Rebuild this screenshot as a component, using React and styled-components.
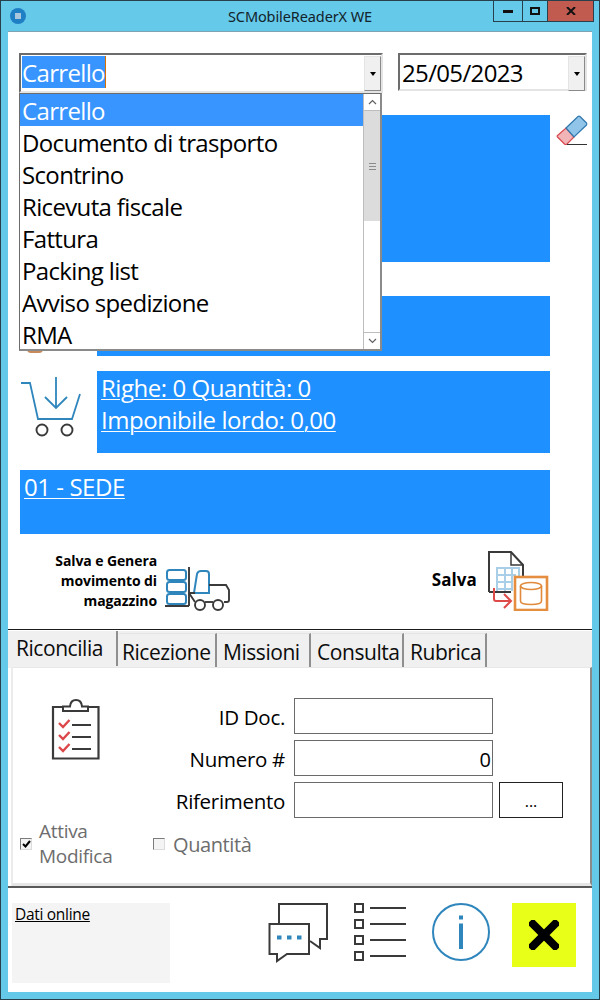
import React from "react";
import styled, { createGlobalStyle } from "styled-components";

const Global = createGlobalStyle`
  html, body { margin: 0; padding: 0; background: #fff; }
  body { font-family: "Open Sans", "Noto Sans", "Liberation Sans", sans-serif; }
  * { box-sizing: border-box; }
`;

const Win = styled.div`
  width: 600px; height: 1000px; background: #65c9ea; border: 1px solid #27404c;
  display: flex; flex-direction: column; overflow: hidden; color: #000;
`;
const TitleBar = styled.div`
  height: 30px; flex: none; display: grid; grid-template-columns: 1fr auto 1fr; align-items: start;
`;
const AppIcon = styled.div`
  width: 16px; height: 16px; margin: 7px 0 0 9px; border-radius: 50%; background: #1f7fc4;
  display: flex; align-items: center; justify-content: center;
  &::after { content: ""; width: 6px; height: 6px; background: #a9c6dc; }
`;
const Title = styled.div`
  font-size: 14.5px; line-height: 16px; padding-top: 7px; color: #12232b;
  font-family: "Noto Sans", sans-serif; letter-spacing: -.1px; white-space: nowrap;
`;
const WinBtns = styled.div`
  justify-self: end; display: flex; height: 21px; margin-right: 5px; border: 1px solid #27404c; border-top: 0;
`;
const WinBtn = styled.div`
  width: ${p => p.$w}px; display: flex; align-items: center; justify-content: center;
  background: ${p => p.$bg || "transparent"}; border-left: ${p => p.$first ? "0" : "1px solid #27404c"};
`;
const Body = styled.div`
  position: relative; flex: 1; margin: 0 7px 7px 7px; background: #fff; border-top: 1px solid #7fa3b2;
  display: flex; flex-direction: column;
`;
const Upper = styled.div`
  padding: 21px 0 0 12px; display: flex; flex-direction: column; height: 597px; flex: none;
`;
const TopRow = styled.div`
  display: flex; align-items: flex-start; height: 62px; margin-left: -1px;
`;
const ComboBox = styled.div`
  display: flex; height: ${p => p.$h}px; width: ${p => p.$w}px; margin-left: ${p => p.$ml || 0}px;
  border: 2px solid #6c6c6c; border-right-color: #e4e4e4; border-bottom-color: #e4e4e4; background: #fff;
  font-size: 24px; line-height: 32px; padding: 1px 0 0 1px; letter-spacing: -.65px;
`;
const Selected = styled.span`
  display: inline-block; height: 32px; line-height: 34px; background: #3895ff; color: #fff; border-right: 1px solid #d96f00;
`;
const ComboText = styled.span`
  flex: 1; padding-left: ${p => p.$pl || 0}px; line-height: ${p => p.$lh || 32}px;
`;
const DropBtn = styled.div`
  width: 17px; height: 35px; background: #f0f0f0; border: 1px solid #e4e4e4;
  border-right-color: #8a8a8a; border-bottom-color: #8a8a8a; display: flex; align-items: center; justify-content: center;
  &::after { content: ""; border: 3.5px solid transparent; border-top: 4px solid #000; border-bottom: 0; }
`;
const Row = styled.div`
  display: flex; align-items: flex-start; height: ${p => p.$h}px; margin-top: ${p => p.$mt || 0}px;
`;
const IconSlot = styled.div`
  width: 77px; flex: none; padding-top: ${p => p.$pt || 0}px;
`;
const Panel = styled.div`
  background: #1e90ff; color: #fff; width: ${p => p.$w}px; height: ${p => p.$h}px; font-size: 24px; line-height: 32px;
  padding: 1px 4px; letter-spacing: -.45px;
`;
const PanelLine = styled.div`
  text-decoration: underline; text-underline-offset: 2px; text-decoration-thickness: 1px; white-space: nowrap;
`;
const Eraser = styled.div`margin: 0 0 0 6px;`;
const Actions = styled.div`
  display: flex; justify-content: space-between; height: 70px; margin-top: 11px; padding-right: 43px;
`;
const Action = styled.div`
  display: flex; align-items: center; gap: ${p => p.$gap}px; margin-left: ${p => p.$ml || 0}px;
`;
const ActionLabel = styled.div`
  font-size: 14px; font-weight: 700; line-height: 20px; text-align: right; width: ${p => p.$w}px; letter-spacing: -.1px; padding-top: 2px;
`;
const SaveLabel = styled(ActionLabel)`font-size: 17px; letter-spacing: .1px; padding-top: 0; white-space: nowrap;`;
const TruckSlot = styled.div`margin-top: 20px;`;
const Rule = styled.div`
  height: 1px; flex: none; background: #1b1b1b;
`;
const TabBar = styled.div`
  margin-top: 1px; height: 37px; flex: none; background: #f0f0f0; display: flex; padding-left: 1px; align-items: flex-start;
`;
const Tab = styled.div`
  width: ${p => p.$w}px; height: ${p => p.$active ? 35 : 34}px; margin-top: ${p => p.$active ? 0 : 2}px;
  flex: none; margin-right: 1px; border-right: 2px solid #8f8f8f; border-top: ${p => p.$active ? 0 : "1px solid #e4e4e4"};
  padding-left: ${p => p.$pl}px;
  font-size: 21px; line-height: ${p => p.$active ? 34 : 36}px; letter-spacing: -.45px; color: #0c0c0c; white-space: nowrap;
`;
const TabPage = styled.div`
  height: 219px; flex: none; background: #fff; margin-left: 3px; display: flex; flex-direction: column;
  border-top: 1px solid #e8e8e8; border-left: 2px solid #ececec; border-bottom: 3px solid #e6e6e6; border-right: 2px solid #8a8a8a;
  margin-top: -1px; padding-top: 30px;
`;
const PageTop = styled.div`display: flex; height: 120px;`;
const ClipSlot = styled.div`width: 293px; display: flex; flex-direction: column; padding: 1px 0 0 38px;`;
const Fields = styled.div`display: grid; grid-template-columns: auto auto auto; grid-auto-rows: 36px; row-gap: 6px; margin-left: -150px; align-items: center; justify-content: start;`;
const FieldLabel = styled.div`
  grid-column: 1; width: 129px; text-align: right; font-size: 20.5px; letter-spacing: -.3px; white-space: nowrap; padding-top: 1px;
`;
const Field = styled.div`
  grid-column: 2; width: 199px; height: 36px; margin-left: 9px; border: 1px solid #6a6a6a; background: #fff; text-align: right;
  font-size: 20px; line-height: 38px; padding-right: 1px;
`;
const Ellipsis = styled.div`
  grid-column: 3; width: 64px; height: 36px; margin-left: 6px; border: 1px solid #222; background: #fff; text-align: center;
  font-size: 16px; line-height: 36px;
`;
const Checks = styled.div`
  display: flex; align-items: center; height: 50px; margin-top: 1px; padding-left: 7px; color: #6d6d6d; font-size: 19px; line-height: 25px;
`;
const CheckWrap = styled.div`
  display: flex; align-items: center; width: ${p => p.$w}px; gap: ${p => p.$gap}px; letter-spacing: -.3px;
`;
const Box = styled.div`
  width: 12px; height: 12px; border: 1px solid #7c7c7c; border-right-color: #dcdcdc; border-bottom-color: #dcdcdc; background: #f4f4f4;
  display: flex; align-items: center; justify-content: center; flex: none;
`;
const QtyLabel = styled.span`font-size: 20px; letter-spacing: -.4px;`;
const Footer = styled.div`
  flex: 1; border-top: 2px solid #595959; display: flex; align-items: flex-start; padding-top: 15px;
`;
const Online = styled.div`
  width: 158px; height: 80px; margin-left: 4px; background: #f4f4f4; padding: 0 3px; font-size: 15.5px; letter-spacing: -.3px; line-height: 22px;
  text-decoration: underline; flex: none;
`;
const FootIcons = styled.div`
  display: flex; align-items: flex-start; margin-left: 98px;
`;
const FootIcon = styled.div`
  margin-left: ${p => p.$ml || 0}px; flex: none;
`;
const CloseBtn = styled.div`
  width: 64px; height: 64px; background: #e8ff17; margin-left: 22px; display: flex; align-items: center; justify-content: center;
`;
const Popup = styled.div`
  position: absolute; left: 11px; top: 61px; width: 363px; height: 258px; background: #fff;
  border: 1px solid #6c6c6c; border-right: 2px solid #8a8a8a; border-bottom: 2px solid #8a8a8a; display: flex;
`;
const PopList = styled.div`
  flex: 1; font-size: 24px; line-height: 34px; letter-spacing: -.65px;
`;
const PopItem = styled.div`
  height: 32px; padding-left: 2px; background: ${p => p.$sel ? "#3895ff" : "transparent"}; color: ${p => p.$sel ? "#fff" : "#000"}; white-space: nowrap;
`;
const Scroll = styled.div`
  width: 17px; flex: none; display: flex; flex-direction: column; border-left: 1px solid #bdbdbd; background: #fff;
`;
const ScrollBtn = styled.div`
  height: 17px; flex: none; display: flex; align-items: center; justify-content: center; border-${p => p.$side}: 1px solid #bdbdbd;
`;
const Thumb = styled.div`
  height: 110px; flex: none; background: #dcdcdc; display: flex; align-items: center; justify-content: center;
  &::after { content: ""; width: 7px; height: 5px; border-top: 1px solid #8b8b8b; border-bottom: 1px solid #8b8b8b; background: linear-gradient(#8b8b8b, #8b8b8b) center / 100% 1px no-repeat; }
`;
const ScrollGap = styled.div`flex: 1;`;
const OrangePeek = styled.div`
  position: absolute; left: 19px; top: 317px; width: 16px; height: 4px; background: #c98a5b; border-radius: 0 0 10px 10px;
`;

const IC = { d: "#3a3a3a", b: "#2f86bd" };
const block = { display: "block" };

const Chevron = ({ up }) => (
  <svg width="9" height="6" viewBox="0 0 9 6"><path d={up ? "M1 5L4.5 1.5L8 5" : "M1 1L4.5 4.5L8 1"} fill="none" stroke="#606060" strokeWidth="1.2" /></svg>
);
const EraserIcon = () => (
  <svg width="32" height="32" viewBox="0 0 32 32" style={block}>
    <path d="M1.5 20.5L10 13L18 22L11 29Q9.5 30 8.5 29L1.5 22Q0.8 21.2 1.5 20.5Z" fill="#f2b5b7" stroke="#d8474f" strokeWidth="1.2" />
    <path d="M10 13L22 1.5Q23 .8 24 1.5L30.5 8Q31.2 9 30.5 10L18 22Z" fill="#90c4e8" stroke="#2f78ae" strokeWidth="1.2" />
    <path d="M11 29.5H31" stroke="#333" strokeWidth="1" />
  </svg>
);
const CartIcon = () => (
  <svg width="62" height="62" viewBox="0 0 62 62" style={block}>
    <path d="M1 7H10L18 43H52L60 18" fill="none" stroke={IC.b} strokeWidth="1.8" />
    <path d="M36 1V32M25 21L36 32L47 21" fill="none" stroke={IC.b} strokeWidth="1.8" />
    <circle cx="22" cy="54" r="5.5" fill="none" stroke={IC.d} strokeWidth="1.9" />
    <circle cx="47" cy="54" r="5.5" fill="none" stroke={IC.d} strokeWidth="1.9" />
  </svg>
);
const TruckIcon = () => (
  <svg width="66" height="48" viewBox="0 0 66 48" style={block}>
    <g fill="none" stroke={IC.b} strokeWidth="2">
      <rect x="2" y="4" width="19" height="10" rx="2.5" />
      <rect x="2" y="16" width="19" height="10" rx="2.5" />
      <rect x="2" y="28" width="19" height="10" rx="2.5" />
      <path d="M29 27L32 8Q33 5 36 5H41Q44 5 44 8V27Z" />
    </g>
    <g fill="none" stroke={IC.d} strokeWidth="1.9">
      <path d="M24 1V40M0 40H24" />
      <path d="M24 27H29L30 27M24 27L30 36" />
      <path d="M44 19H61L64 24V34Q64 36 62 36H59" />
      <circle cx="35" cy="39" r="5" />
      <circle cx="53" cy="39" r="5" />
      <path d="M40 36H48" />
    </g>
  </svg>
);
const SaveIcon = () => (
  <svg width="62" height="62" viewBox="0 0 62 62" style={block}>
    <path d="M2 43V3H24L36 16V28" fill="none" stroke={IC.d} strokeWidth="2" />
    <path d="M24 3V16H36" fill="none" stroke={IC.d} strokeWidth="1.5" />
    <path d="M2 43H24" fill="none" stroke={IC.d} strokeWidth="2" />
    <g stroke="#a9cfe8" strokeWidth="2" fill="none">
      <path d="M9.5 19H33M9.5 26H29M9.5 33H26M9.5 40H26M10 18V42M18 18V42M25 18V42M32 18V28" />
    </g>
    <path d="M7 39V50Q7 52 9 52H23M17 45L24 52L17 59" fill="none" stroke="#de4a48" strokeWidth="2" />
    <rect x="28" y="28" width="32" height="33" fill="#fff" stroke="#e58e3f" strokeWidth="2.6" />
    <ellipse cx="44" cy="37" rx="10.5" ry="3.5" fill="none" stroke="#e08a3c" strokeWidth="1.6" />
    <path d="M33.5 37V52Q33.5 55.5 44 55.5Q54.5 55.5 54.5 52V37" fill="none" stroke="#e08a3c" strokeWidth="1.6" />
  </svg>
);
const ClipIcon = () => (
  <svg width="50" height="61" viewBox="0 0 50 61" style={block}>
    <path d="M13 8H2V59.5H47.5V8H36" fill="none" stroke={IC.d} strokeWidth="2.2" />
    <path d="M12 7.5H19Q19.5 1 25 1Q30.5 1 31 7.5H37V12H12Z" fill="#fff" stroke={IC.d} strokeWidth="2" />
    <path d="M8 24L12 28L18.5 21M8 36L12 40L18.5 33M8 48L12 52L18.5 45" fill="none" stroke="#dc474a" strokeWidth="2.4" />
    <path d="M21 26H40M21 38H40M21 50H40" stroke={IC.d} strokeWidth="2" />
  </svg>
);
const ChatIcon = () => (
  <svg width="62" height="60" viewBox="0 0 62 60" style={block}>
    <path d="M11 20V1H59V36H52V45L42 38" fill="none" stroke={IC.d} strokeWidth="2" />
    <path d="M1.5 21H41V51H19L9 58V51H1.5Z" fill="#fff" stroke={IC.d} strokeWidth="2" />
    <path d="M9 32.5H13.5V36.5H9ZM19 32.5H23.5V36.5H19ZM29 32.5H33.5V36.5H29Z" fill={IC.b} />
  </svg>
);
const ListIcon = () => (
  <svg width="54" height="58" viewBox="0 0 54 58" style={block}>
    <g fill="none" stroke={IC.d} strokeWidth="2">
      <rect x="1" y="1" width="8" height="8" />
      <rect x="1" y="17" width="8" height="8" />
      <rect x="1" y="33" width="8" height="8" />
      <rect x="1" y="49" width="8" height="8" />
      <path d="M16 5H52M16 21H52M16 37H52M16 53H52" />
    </g>
  </svg>
);
const InfoIcon = () => (
  <svg width="58" height="58" viewBox="0 0 58 58" style={block}>
    <circle cx="29" cy="29" r="28" fill="none" stroke={IC.b} strokeWidth="2" />
    <path d="M27 12.5H31V16.5H27ZM27 20.5H31V46H27Z" fill={IC.b} />
  </svg>
);

const items = ["Carrello", "Documento di trasporto", "Scontrino", "Ricevuta fiscale", "Fattura", "Packing list", "Avviso spedizione", "RMA"];
const tabs = [["Riconcilia", 109, 7, true], ["Ricezione", 98, 3], ["Missioni", 93, 5], ["Consulta", 92, 5], ["Rubrica", 82, 5]];

export default function App() {
  return (
    <Win>
      <Global />
      <TitleBar>
        <AppIcon />
        <Title>SCMobileReaderX WE</Title>
        <WinBtns>
          <WinBtn $w={28} $first><svg width="10" height="3"><rect width="10" height="3" fill="#111" /></svg></WinBtn>
          <WinBtn $w={25}><svg width="10" height="8"><rect x="1" y="1" width="8" height="6" fill="none" stroke="#111" strokeWidth="2" /></svg></WinBtn>
          <WinBtn $w={46} $bg="#c15b50"><svg width="10" height="8" viewBox="0 0 10 8"><path d="M1 0L9 8M9 0L1 8" stroke="#111" strokeWidth="2" /></svg></WinBtn>
        </WinBtns>
      </TitleBar>
      <Body>
        <Upper>
          <TopRow>
            <ComboBox $w={364} $h={40}>
              <ComboText><Selected>Carrello</Selected></ComboText>
              <DropBtn />
            </ComboBox>
            <ComboBox $w={189} $h={38} $ml={15}>
              <ComboText $pl={1} $lh={33}>25/05/2023</ComboText>
              <DropBtn />
            </ComboBox>
          </TopRow>
          <Row $h={147}>
            <IconSlot />
            <Panel $w={453} $h={147} />
            <Eraser><EraserIcon /></Eraser>
          </Row>
          <Row $h={60} $mt={34}>
            <IconSlot />
            <Panel $w={453} $h={60} />
          </Row>
          <Row $h={82} $mt={15}>
            <IconSlot $pt={5}><CartIcon /></IconSlot>
            <Panel $w={453} $h={82}>
              <PanelLine>Righe: 0 Quantità: 0</PanelLine>
              <PanelLine>Imponibile lordo: 0,00</PanelLine>
            </Panel>
          </Row>
          <Row $h={64} $mt={17}>
            <Panel $w={530} $h={64}>
              <PanelLine>01 - SEDE</PanelLine>
            </Panel>
          </Row>
          <Actions>
            <Action $gap={8} $ml={20}>
              <ActionLabel $w={117}>Salva e Genera<br />movimento di<br />magazzino</ActionLabel>
              <TruckSlot><TruckIcon /></TruckSlot>
            </Action>
            <Action $gap={10}>
              <SaveLabel $w={60}>Salva</SaveLabel>
              <SaveIcon />
            </Action>
          </Actions>
        </Upper>
        <Rule />
        <TabBar>
          {tabs.map(([t, w, pl, a]) => <Tab key={t} $w={w} $pl={pl} $active={a}>{t}</Tab>)}
        </TabBar>
        <TabPage>
          <PageTop>
            <ClipSlot><ClipIcon /></ClipSlot>
            <Fields>
              <FieldLabel>ID Doc.</FieldLabel><Field />
              <FieldLabel>Numero #</FieldLabel><Field>0</Field>
              <FieldLabel>Riferimento</FieldLabel><Field /><Ellipsis>...</Ellipsis>
            </Fields>
          </PageTop>
          <Checks>
            <CheckWrap $w={133} $gap={7}>
              <Box><svg width="9" height="8" viewBox="0 0 9 8"><path d="M1 4L3.5 6.5L8 1" fill="none" stroke="#000" strokeWidth="2" /></svg></Box>
              <span>Attiva<br />Modifica</span>
            </CheckWrap>
            <CheckWrap $w={150} $gap={8}>
              <Box />
              <QtyLabel>Quantità</QtyLabel>
            </CheckWrap>
          </Checks>
        </TabPage>
        <Footer>
          <Online>Dati online</Online>
          <FootIcons>
            <FootIcon><ChatIcon /></FootIcon>
            <FootIcon $ml={24}><ListIcon /></FootIcon>
            <FootIcon $ml={24}><InfoIcon /></FootIcon>
            <CloseBtn>
              <svg width="30" height="30" viewBox="0 0 30 30"><path d="M4 4L26 26M26 4L4 26" stroke="#000" strokeWidth="8" strokeLinecap="square" /></svg>
            </CloseBtn>
          </FootIcons>
        </Footer>
        <OrangePeek />
        <Popup>
          <PopList>
            {items.map((it, i) => <PopItem key={it} $sel={i === 0}>{it}</PopItem>)}
          </PopList>
          <Scroll>
            <ScrollBtn $side="bottom"><Chevron up /></ScrollBtn>
            <Thumb />
            <ScrollGap />
            <ScrollBtn $side="top"><Chevron /></ScrollBtn>
          </Scroll>
        </Popup>
      </Body>
    </Win>
  );
}
